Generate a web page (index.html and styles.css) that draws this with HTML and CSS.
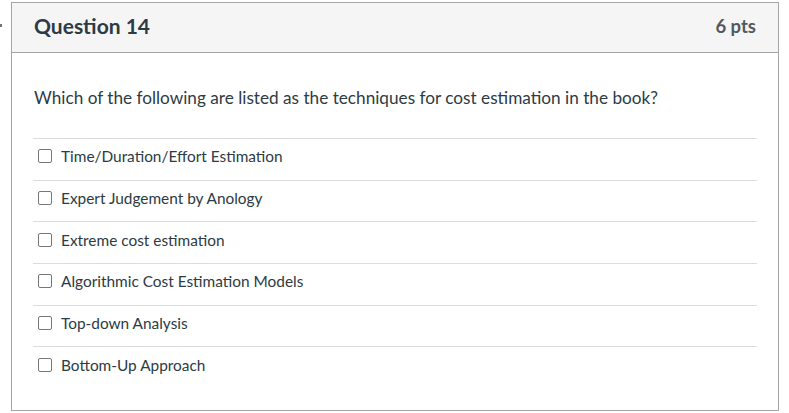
FILE: index.html
```html
<!DOCTYPE html>
<html>
<head>
<meta charset="utf-8">
<link rel="stylesheet" href="styles.css">
</head>
<body>
<span class="edge-dot"></span>
<div class="card">
  <div class="card-header">
    <span class="q-title">Question 14</span>
    <span class="q-pts">6 pts</span>
  </div>
  <div class="card-body">
    <p class="q-text">Which of the following are listed as the techniques for cost estimation in the book?</p>
    <div class="options">
      <label class="option"><span class="box"></span><span>Time/Duration/Effort Estimation</span></label>
      <label class="option"><span class="box"></span><span>Expert Judgement by Anology</span></label>
      <label class="option"><span class="box"></span><span>Extreme cost estimation</span></label>
      <label class="option"><span class="box"></span><span>Algorithmic Cost Estimation Models</span></label>
      <label class="option"><span class="box"></span><span>Top-down Analysis</span></label>
      <label class="option"><span class="box"></span><span>Bottom-Up Approach</span></label>
    </div>
  </div>
</div>
</body>
</html>
```
FILE: styles.css
```css
html, body {
  margin: 0;
  padding: 0;
  background: #ffffff;
}
body {
  font-family: Lato, "Noto Sans", sans-serif;
  color: #2d3b45;
  position: relative;
}
.edge-dot {
  position: absolute;
  left: 0;
  top: 24px;
  width: 2px;
  height: 3px;
  background: #6b7780;
}
.card {
  margin: 2px 0 0 11px;
  width: 768px;
  height: 409px;
  box-sizing: border-box;
  border: 1px solid #a5a5a5;
}
.card-header {
  height: 50px;
  box-sizing: border-box;
  background: #f5f5f5;
  border-bottom: 1px solid #a5a5a5;
  display: flex;
  align-items: center;
  justify-content: space-between;
  padding: 0 22px 4px 22px;
}
.q-title {
  font-size: 21px;
  font-weight: bold;
  color: #2d3b45;
}
.q-pts {
  font-size: 18.5px;
  font-weight: bold;
  color: #505a62;
}
.card-body {
  padding: 33px 21px 0 21px;
}
.q-text {
  margin: 0 0 28px 1px;
  font-size: 17.2px;
  line-height: 24px;
}
.options {
  display: flex;
  flex-direction: column;
}
.option {
  display: flex;
  align-items: center;
  height: 41.7px;
  box-sizing: border-box;
  border-top: 1px solid #dcdcdc;
  font-size: 15.4px;
  padding-left: 5px;
  padding-bottom: 6px;
}
.box {
  width: 14px;
  height: 14px;
  box-sizing: border-box;
  border: 1px solid #777777;
  border-radius: 2px;
  margin-right: 9px;
  background: #fff;
}
```
